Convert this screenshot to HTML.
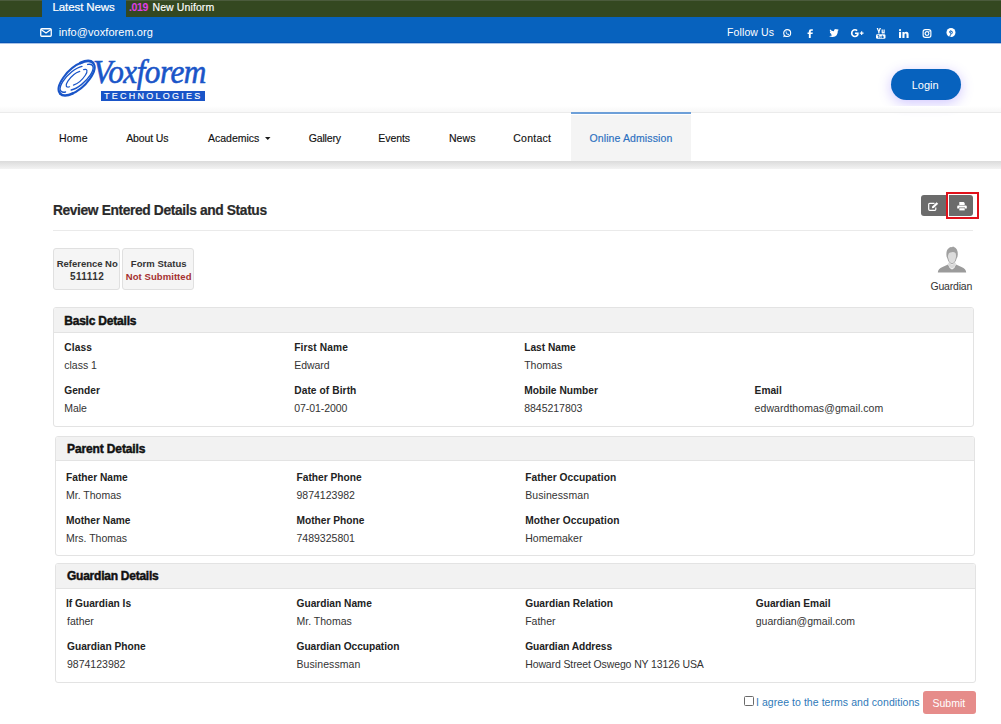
<!DOCTYPE html>
<html><head><meta charset="utf-8"><title>Review Details</title>
<style>
*{box-sizing:border-box;margin:0;padding:0}
html,body{width:1001px;height:724px;overflow:hidden;background:#fff;font-family:"Liberation Sans",sans-serif;color:#333}
.t{position:absolute;line-height:14px;white-space:nowrap}
.a{position:absolute}
svg{position:absolute;overflow:visible}

</style></head><body>
<div class="a" style="left:0;top:0;width:1001px;height:17px;background:#344820"></div>
<div class="a" style="left:0;top:0;width:1001px;height:1px;background:#4b5b3c"></div>
<div class="a" style="left:42px;top:0;width:84px;height:17px;background:#0762be"></div>
<div class="a" style="left:0;top:17px;width:1001px;height:26px;background:#0762be"></div>
<div class="a" style="left:0;top:42px;width:1001px;height:1px;background:#0454b6"></div>
<div class="a" style="left:0;top:43px;width:1001px;height:1px;background:#a9c4e6"></div>
<!-- envelope -->
<svg style="left:40px;top:28px" width="12" height="9" viewBox="0 0 12 9"><rect x="0.75" y="0.75" width="10.5" height="7.5" rx="1" fill="none" stroke="#fff" stroke-width="1.3"/><path d="M1 1.5 L6 5 L11 1.5" fill="none" stroke="#fff" stroke-width="1.2"/></svg>
<!-- social icons -->
<svg style="left:782px;top:28.5px" width="10" height="8.5" viewBox="0 0 10 10"><circle cx="5.2" cy="4.8" r="4.1" fill="none" stroke="#fff" stroke-width="1.3"/><path d="M0.6 9.6 L1.4 6.4 L3.6 8.4Z" fill="#fff"/><path d="M3.2 3.2 Q3.5 2.3 4.1 2.6 L4.7 3.8 Q4.5 4.3 4.3 4.4 Q5 5.6 6.2 6 L6.6 5.5 L7.6 6 Q7.6 7 6.6 7.1 Q3.8 6.7 3.2 3.2Z" fill="#fff"/></svg>
<svg style="left:806.5px;top:28.5px" width="6.5" height="9" viewBox="0 0 6 9"><path d="M1.6 9 V4.9 H0.3 V3.4 H1.6 V2.3 Q1.6 0.2 3.7 0.2 L5.6 0.3 V1.8 H4.4 Q3.5 1.8 3.5 2.6 V3.4 H5.6 L5.3 4.9 H3.5 V9Z" fill="#fff"/></svg>
<svg style="left:828.5px;top:28.8px" width="10" height="8" viewBox="0 0 10 8"><path d="M9.8 1 Q9.2 1.3 8.6 1.3 Q9.3 0.9 9.5 0.1 Q8.9 0.5 8.2 0.6 Q7.6 0 6.8 0 Q4.9 0.1 4.9 2.2 Q2.5 2.1 1 0.3 Q0.3 1.8 1.6 2.9 Q1.1 2.9 0.8 2.7 Q0.8 4.1 2.3 4.6 Q1.8 4.7 1.4 4.6 Q1.8 5.9 3.3 6 Q1.9 7.1 0 6.9 Q1.8 8 3.8 7.9 Q9 7.6 8.8 2 Q9.4 1.6 9.8 1Z" fill="#fff"/></svg>
<svg style="left:849.5px;top:28.5px" width="15" height="8.5" viewBox="0 0 14 9"><path d="M4.3 3.6 H8.3 Q8.6 6 7.2 7.6 Q6 8.8 4.3 8.8 Q2.4 8.8 1.2 7.5 Q0 6.2 0 4.4 Q0 2.6 1.3 1.3 Q2.5 0 4.3 0 Q6 0 7.2 1.1 L6 2.3 Q5.3 1.7 4.3 1.7 Q3.2 1.7 2.5 2.5 Q1.8 3.3 1.8 4.4 Q1.8 5.5 2.5 6.3 Q3.2 7.1 4.3 7.1 Q5.9 7.1 6.4 5.3 H4.3Z" fill="#fff"/><path d="M10.8 2.5 H12 V3.8 H13.4 V5 H12 V6.3 H10.8 V5 H9.4 V3.8 H10.8Z" fill="#fff"/></svg>
<svg style="left:875.5px;top:27.5px" width="10" height="11" viewBox="0 0 10 11"><path d="M0.6 0 H2 L2.8 2.5 L3.6 0 H5 L3.5 3.8 V5.5 H2.2 V3.8Z M5.6 1.6 H6.8 V4.3 Q7.2 4.3 7.5 3.9 V1.6 H8.7 V5.4 H7.5 V5 Q7 5.5 6.4 5.5 Q5.6 5.5 5.6 4.6Z" fill="#fff"/><rect x="0" y="6.2" width="9.5" height="4.6" rx="1.3" fill="#fff"/><path d="M1.3 7 H3.3 V7.6 H2.6 V10 H2 V7.6 H1.3Z M3.6 8 H4.2 V9.6 L4.8 9.4 V8 H5.4 V10 H4.8 V9.8 Q3.6 10.4 3.6 9.6Z M5.9 7 H6.5 V8.2 Q7.6 7.7 7.6 8.8 V9.4 Q7.6 10.4 6.5 9.8 V10 H5.9Z" fill="#0762be"/></svg>
<svg style="left:899px;top:28.5px" width="10" height="9" viewBox="0 0 10 9"><rect x="0" y="2.9" width="2.1" height="6.1" fill="#fff"/><circle cx="1.05" cy="1.1" r="1.1" fill="#fff"/><path d="M3.4 2.9 H5.4 V3.8 Q6 2.7 7.4 2.7 Q9.6 2.7 9.6 5.4 V9 H7.5 V5.8 Q7.5 4.4 6.5 4.4 Q5.5 4.4 5.5 5.8 V9 H3.4Z" fill="#fff"/></svg>
<svg style="left:922px;top:28.5px" width="10" height="9" viewBox="0 0 10 10"><rect x="0.7" y="0.7" width="8.6" height="8.6" rx="2.4" fill="none" stroke="#fff" stroke-width="1.3"/><circle cx="5" cy="5" r="2.1" fill="none" stroke="#fff" stroke-width="1.3"/><circle cx="7.5" cy="2.5" r="0.6" fill="#fff"/></svg>
<svg style="left:945.5px;top:28.3px" width="10" height="9" viewBox="0 0 10 10"><circle cx="5" cy="5" r="5" fill="#fff"/><path d="M4.4 7.4 L3.6 9.8 M4.9 3.4 Q6.8 3.2 6.6 5 Q6.4 6.6 5.2 6.5 Q4.5 6.4 4.5 5.6 L5 3.8" fill="none" stroke="#0762be" stroke-width="1.1" stroke-linecap="round"/><path d="M3.3 5.2 Q2.9 3.5 4.6 2.8" fill="none" stroke="#0762be" stroke-width="1"/></svg>

<!-- logo -->
<svg style="left:0;top:0" width="1" height="1" viewBox="0 0 1 1">
 <g transform="translate(76.6 78.2) rotate(-43)" fill="none" stroke="#1a55c8" stroke-linecap="round">
  <path d="M-22.5 0 A22.5 10.5 0 0 1 15 -7.8" stroke-width="2"/>
  <path d="M22.5 0 A22.5 10.5 0 0 1 -15 7.8" stroke-width="2"/>
  <path d="M-22.5 0 A22.5 10.5 0 0 0 -13 8.6" stroke-width="2.6"/>
  <path d="M22.5 0 A22.5 10.5 0 0 0 13 -8.6" stroke-width="2.6"/>
  <path d="M-17.5 2.5 A17.5 6.8 0 0 1 12 -5" stroke-width="1.4"/>
  <path d="M17.5 -2.5 A17.5 6.8 0 0 1 -12 5" stroke-width="1.4"/>
  <path d="M-11 1.5 A11 3.8 0 0 1 7 -2.9" stroke-width="1.2"/>
  <path d="M11 -1.5 A11 3.8 0 0 1 -7 2.9" stroke-width="1.2"/>
 </g>
</svg>
<div class="a" style="left:93px;top:54px;font-family:'Liberation Serif',serif;font-style:italic;font-size:34px;line-height:36px;color:#1a55c8;-webkit-text-stroke:0.6px #1a55c8;letter-spacing:-0.55px;transform:scaleX(0.92);transform-origin:0 0">Voxforem</div>
<div class="a" style="left:101px;top:91px;width:104px;height:10px;background:#1a55c8"></div>
<div class="a" style="left:104px;top:89px;width:102px;font-size:9px;line-height:14px;color:#fff;letter-spacing:2.25px;-webkit-text-stroke:0.15px #fff">TECHNOLOGIES</div>

<!-- login -->
<div class="a" style="left:890.5px;top:68.5px;width:70.5px;height:31.5px;border-radius:16px;background:#0762be;box-shadow:0 3px 13px rgba(110,80,255,.33)"></div>

<!-- nav -->
<div class="a" style="left:0;top:106px;width:1001px;height:6px;background:linear-gradient(#fff,#f7f7f7)"></div>
<div class="a" style="left:0;top:112px;width:1001px;height:1px;background:#ebebeb"></div>
<div class="a" style="left:0;top:161px;width:1001px;height:8px;background:linear-gradient(#dbdbdb,#f3f3f3)"></div>
<div class="a" style="left:571px;top:112px;width:120px;height:2px;background:#6d9fd8"></div>
<div class="a" style="left:571px;top:115px;width:120px;height:46px;background:#f4f4f4"></div>
<svg style="left:265px;top:136.5px" width="6" height="3" viewBox="0 0 6 3"><path d="M0 0 H5.5 L2.75 3Z" fill="#1a1a1a"/></svg>

<!-- title hr -->
<div class="a" style="left:53px;top:230px;width:920px;height:1px;background:#eaeaea"></div>

<!-- buttons -->
<div class="a" style="left:921px;top:195px;width:26px;height:21px;background:#6b6b6b;border-radius:3px 0 0 3px"></div>
<div class="a" style="left:949px;top:195px;width:24px;height:21px;background:#6b6b6b;border-radius:0 3px 3px 0"></div>
<div class="a" style="left:946px;top:192px;width:33px;height:27px;border:2px solid #e0111b"></div>
<svg style="left:928px;top:201.5px" width="11" height="9" viewBox="0 0 11 9"><path d="M6.5 1.3 H1.8 Q0.7 1.3 0.7 2.4 V7.3 Q0.7 8.3 1.8 8.3 H6.8 Q7.8 8.3 7.8 7.3 V5.5" fill="none" stroke="#fff" stroke-width="1.2"/><path d="M3.8 6.2 L4.2 4.4 L8.6 0.2 L10.2 1.8 L5.8 6Z" fill="#fff"/></svg>
<svg style="left:956.5px;top:202px" width="10" height="8.5" viewBox="0 0 10 8.5"><path d="M2.3 0 H6.6 L7.7 1.1 V3 H2.3Z" fill="#fff"/><path d="M1.2 3.4 H8.8 Q9.8 3.4 9.8 4.5 V6.6 H8 V5.6 H2 V6.6 H0.2 V4.5 Q0.2 3.4 1.2 3.4Z" fill="#fff"/><rect x="2.3" y="6.2" width="5.4" height="2.2" fill="#fff"/></svg>

<!-- avatar -->
<svg style="left:937px;top:246px" width="30" height="27" viewBox="0 0 30 27">
 <path d="M0.8 26.6 Q1 22.5 5.5 21 L11 18.5 Q12 22 15 23.5 Q18 22 19 18.5 L24.5 21 Q29 22.5 29.2 26.6Z" fill="#9b9b9b"/>
 <path d="M11 18 Q12 21.5 15 22.8 Q18 21.5 19 18 L18.2 16.5 Q16.5 18.5 15 18.5 Q13.5 18.5 11.8 16.5Z" fill="#d8d8d8"/>
 <path d="M9.4 9 Q9.2 3.5 12 2 Q13.5 0.6 15 1.2 Q16 0 17 1 Q20.8 2.2 20.8 8.5 Q20.7 11 19.8 12 Q19 15.5 17.2 17 Q15 19 12.8 17 Q11 15.5 10.2 12 Q9.4 11 9.4 9Z" fill="#a0a0a0"/>
 <path d="M11.1 9.5 Q11.6 6.2 13.5 6.4 Q15.5 5.8 17.2 6.2 Q19.2 6.4 19 9.5 Q19.3 10 18.9 11.5 Q18.4 15 16.8 16.5 Q15 18 13.2 16.5 Q11.6 15 11.1 11.5 Q10.7 10 11.1 9.5Z" fill="#dcdcdc"/>
</svg>

<!-- ref boxes -->
<div class="a" style="left:53px;top:248px;width:67px;height:42px;background:#f5f5f5;border:1px solid #e0e0e0;border-radius:3px"></div>
<div class="a" style="left:122px;top:248px;width:72px;height:42px;background:#f5f5f5;border:1px solid #e0e0e0;border-radius:3px"></div>

<!-- panels -->
<div class="a" style="left:53px;top:307px;width:921px;height:120px;border:1px solid #e3e3e3;border-radius:3px;overflow:hidden"><div style="height:25px;background:#f2f2f2;border-bottom:1px solid #e3e3e3"></div></div>
<div class="a" style="left:55px;top:436px;width:920px;height:120px;border:1px solid #e3e3e3;border-radius:3px;overflow:hidden"><div style="height:24px;background:#f2f2f2;border-bottom:1px solid #e3e3e3"></div></div>
<div class="a" style="left:55px;top:563px;width:921px;height:120px;border:1px solid #e3e3e3;border-radius:3px;overflow:hidden"><div style="height:25px;background:#f2f2f2;border-bottom:1px solid #e3e3e3"></div></div>

<!-- footer -->
<div class="a" style="left:744px;top:696px;width:10px;height:10px;border:1px solid #6a6a6a;border-radius:1.5px;background:#fff"></div>
<div class="a" style="left:922.5px;top:690.5px;width:53px;height:23.5px;background:#e68c8a;border-radius:3px"></div>

<div class="t" style="left:52.50px;top:0px;font-size:11.5px;font-weight:normal;color:#fff;letter-spacing:-0.100px;-webkit-text-stroke:0.2px #fff;">Latest News</div>
<div class="t" style="left:129.00px;top:0px;font-size:10.5px;font-weight:bold;color:#e03ee8;letter-spacing:-0.333px;">.019</div>
<div class="t" style="left:152.50px;top:0px;font-size:10.5px;font-weight:normal;color:#fff;letter-spacing:0.100px;-webkit-text-stroke:0.15px #fff;">New Uniform</div>
<div class="t" style="left:58.75px;top:25px;font-size:11px;font-weight:normal;color:#fff;letter-spacing:0.062px;">info@voxforem.org</div>
<div class="t" style="left:727.00px;top:25px;font-size:10.5px;font-weight:normal;color:#fff;letter-spacing:0.119px;">Follow Us</div>
<div class="t" style="left:911.80px;top:78px;font-size:11px;font-weight:normal;color:#fff;letter-spacing:-0.050px;">Login</div>
<div class="t" style="left:59.00px;top:131px;font-size:10.5px;font-weight:normal;color:#111;letter-spacing:0.198px;-webkit-text-stroke:0.15px #111;">Home</div>
<div class="t" style="left:126.25px;top:131px;font-size:10.5px;font-weight:normal;color:#111;letter-spacing:-0.142px;-webkit-text-stroke:0.15px #111;">About Us</div>
<div class="t" style="left:208.00px;top:131px;font-size:10.5px;font-weight:normal;color:#111;-webkit-text-stroke:0.15px #111;">Academics</div>
<div class="t" style="left:308.75px;top:131px;font-size:10.5px;font-weight:normal;color:#111;letter-spacing:-0.166px;-webkit-text-stroke:0.15px #111;">Gallery</div>
<div class="t" style="left:378.21px;top:131px;font-size:10.5px;font-weight:normal;color:#111;letter-spacing:-0.040px;-webkit-text-stroke:0.15px #111;">Events</div>
<div class="t" style="left:448.90px;top:131px;font-size:10.5px;font-weight:normal;color:#111;letter-spacing:0.132px;-webkit-text-stroke:0.15px #111;">News</div>
<div class="t" style="left:513.21px;top:131px;font-size:10.5px;font-weight:normal;color:#111;letter-spacing:0.265px;-webkit-text-stroke:0.15px #111;">Contact</div>
<div class="t" style="left:589.50px;top:131px;font-size:10.5px;font-weight:normal;color:#2a6fc0;letter-spacing:0.109px;-webkit-text-stroke:0.15px #2a6fc0;">Online Admission</div>
<div class="t" style="left:52.90px;top:204px;font-size:13.8px;font-weight:bold;color:#2a2a2a;letter-spacing:-0.375px;-webkit-text-stroke:0.2px #2a2a2a;">Review Entered Details and Status</div>
<div class="t" style="left:56.71px;top:257px;font-size:9.5px;font-weight:bold;color:#333;letter-spacing:-0.023px;">Reference No</div>
<div class="t" style="left:70.00px;top:270px;font-size:10px;font-weight:bold;color:#333;letter-spacing:0.400px;">511112</div>
<div class="t" style="left:130.80px;top:257px;font-size:9.5px;font-weight:bold;color:#333;letter-spacing:0.040px;">Form Status</div>
<div class="t" style="left:125.80px;top:270px;font-size:9.5px;font-weight:bold;color:#a5302f;letter-spacing:0.065px;">Not Submitted</div>
<div class="t" style="left:930.40px;top:279px;font-size:10.5px;font-weight:normal;color:#333;letter-spacing:-0.174px;">Guardian</div>
<div class="t" style="left:64.21px;top:314px;font-size:12px;font-weight:bold;color:#111;letter-spacing:-0.202px;-webkit-text-stroke:0.45px #111;">Basic Details</div>
<div class="t" style="left:64.21px;top:341px;font-size:10.2px;font-weight:bold;color:#222;letter-spacing:0.150px;">Class</div>
<div class="t" style="left:64.21px;top:358px;font-size:10.5px;font-weight:normal;color:#333;">class 1</div>
<div class="t" style="left:294.21px;top:341px;font-size:10.2px;font-weight:bold;color:#222;letter-spacing:0.111px;">First Name</div>
<div class="t" style="left:294.21px;top:358px;font-size:10.5px;font-weight:normal;color:#333;letter-spacing:-0.040px;">Edward</div>
<div class="t" style="left:524.21px;top:341px;font-size:10.2px;font-weight:bold;color:#222;">Last Name</div>
<div class="t" style="left:524.21px;top:358px;font-size:10.5px;font-weight:normal;color:#333;">Thomas</div>
<div class="t" style="left:64.21px;top:384px;font-size:10.2px;font-weight:bold;color:#222;">Gender</div>
<div class="t" style="left:64.21px;top:401px;font-size:10.5px;font-weight:normal;color:#333;">Male</div>
<div class="t" style="left:294.21px;top:384px;font-size:10.2px;font-weight:bold;color:#222;letter-spacing:0.084px;">Date of Birth</div>
<div class="t" style="left:294.21px;top:401px;font-size:10.5px;font-weight:normal;color:#333;letter-spacing:-0.063px;">07-01-2000</div>
<div class="t" style="left:524.21px;top:384px;font-size:10.2px;font-weight:bold;color:#222;letter-spacing:0.013px;">Mobile Number</div>
<div class="t" style="left:524.21px;top:401px;font-size:10.5px;font-weight:normal;color:#333;letter-spacing:-0.027px;">8845217803</div>
<div class="t" style="left:754.60px;top:384px;font-size:10.2px;font-weight:bold;color:#222;">Email</div>
<div class="t" style="left:754.60px;top:401px;font-size:10.5px;font-weight:normal;color:#333;letter-spacing:0.060px;">edwardthomas@gmail.com</div>
<div class="t" style="left:67.00px;top:442px;font-size:12px;font-weight:bold;color:#111;letter-spacing:-0.127px;-webkit-text-stroke:0.45px #111;">Parent Details</div>
<div class="t" style="left:66.00px;top:471px;font-size:10.2px;font-weight:bold;color:#222;">Father Name</div>
<div class="t" style="left:66.00px;top:488px;font-size:10.5px;font-weight:normal;color:#333;">Mr. Thomas</div>
<div class="t" style="left:296.50px;top:471px;font-size:10.2px;font-weight:bold;color:#222;">Father Phone</div>
<div class="t" style="left:296.50px;top:488px;font-size:10.5px;font-weight:normal;color:#333;">9874123982</div>
<div class="t" style="left:525.21px;top:471px;font-size:10.2px;font-weight:bold;color:#222;letter-spacing:0.062px;">Father Occupation</div>
<div class="t" style="left:525.21px;top:488px;font-size:10.5px;font-weight:normal;color:#333;letter-spacing:0.080px;">Businessman</div>
<div class="t" style="left:66.00px;top:514px;font-size:10.2px;font-weight:bold;color:#222;">Mother Name</div>
<div class="t" style="left:66.00px;top:531px;font-size:10.5px;font-weight:normal;color:#333;">Mrs. Thomas</div>
<div class="t" style="left:296.50px;top:514px;font-size:10.2px;font-weight:bold;color:#222;">Mother Phone</div>
<div class="t" style="left:296.50px;top:531px;font-size:10.5px;font-weight:normal;color:#333;">7489325801</div>
<div class="t" style="left:525.21px;top:514px;font-size:10.2px;font-weight:bold;color:#222;letter-spacing:0.096px;">Mother Occupation</div>
<div class="t" style="left:525.21px;top:531px;font-size:10.5px;font-weight:normal;color:#333;">Homemaker</div>
<div class="t" style="left:67.00px;top:569px;font-size:12px;font-weight:bold;color:#111;letter-spacing:-0.242px;-webkit-text-stroke:0.45px #111;">Guardian Details</div>
<div class="t" style="left:66.00px;top:597px;font-size:10.2px;font-weight:bold;color:#222;">If Guardian Is</div>
<div class="t" style="left:67.00px;top:614px;font-size:10.5px;font-weight:normal;color:#333;">father</div>
<div class="t" style="left:296.50px;top:597px;font-size:10.2px;font-weight:bold;color:#222;">Guardian Name</div>
<div class="t" style="left:296.50px;top:614px;font-size:10.5px;font-weight:normal;color:#333;">Mr. Thomas</div>
<div class="t" style="left:525.21px;top:597px;font-size:10.2px;font-weight:bold;color:#222;">Guardian Relation</div>
<div class="t" style="left:525.21px;top:614px;font-size:10.5px;font-weight:normal;color:#333;">Father</div>
<div class="t" style="left:755.75px;top:597px;font-size:10.2px;font-weight:bold;color:#222;">Guardian Email</div>
<div class="t" style="left:755.75px;top:614px;font-size:10.5px;font-weight:normal;color:#333;">guardian@gmail.com</div>
<div class="t" style="left:67.00px;top:640px;font-size:10.2px;font-weight:bold;color:#222;">Guardian Phone</div>
<div class="t" style="left:67.00px;top:657px;font-size:10.5px;font-weight:normal;color:#333;">9874123982</div>
<div class="t" style="left:296.50px;top:640px;font-size:10.2px;font-weight:bold;color:#222;letter-spacing:-0.040px;">Guardian Occupation</div>
<div class="t" style="left:296.50px;top:657px;font-size:10.5px;font-weight:normal;color:#333;letter-spacing:0.080px;">Businessman</div>
<div class="t" style="left:525.21px;top:640px;font-size:10.2px;font-weight:bold;color:#222;letter-spacing:-0.067px;">Guardian Address</div>
<div class="t" style="left:525.21px;top:657px;font-size:10.5px;font-weight:normal;color:#333;letter-spacing:-0.121px;">Howard Street Oswego NY 13126 USA</div>
<div class="t" style="left:756.00px;top:695px;font-size:10.5px;font-weight:normal;color:#2f7ab9;letter-spacing:0.056px;">I agree to the terms and conditions</div>
<div class="t" style="left:932.50px;top:696px;font-size:10.5px;font-weight:normal;color:#fff;">Submit</div>
</body></html>
